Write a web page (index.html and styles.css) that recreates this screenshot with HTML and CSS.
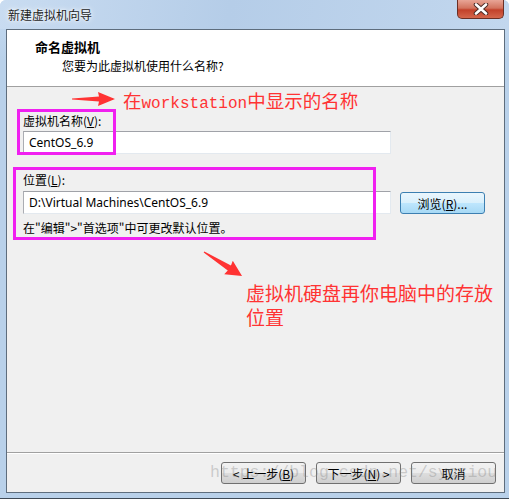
FILE: index.html
```html
<!DOCTYPE html>
<html lang="zh-CN">
<head>
    <meta charset="UTF-8">
    <title>新建虚拟机向导</title>
    <link rel="stylesheet" href="styles.css">
</head>
<body>
    <div class="window">
        <div class="titlebar">
            <span class="title">新建虚拟机向导</span>
            <div class="close">
                <svg width="20" height="12" viewBox="0 0 20 12">
                    <path d="M5 1.5 L15 10.5 M15 1.5 L5 10.5" stroke="#4a2a26" stroke-width="4.5" stroke-linecap="round"/>
                    <path d="M5 1.5 L15 10.5 M15 1.5 L5 10.5" stroke="#ffffff" stroke-width="2.6" stroke-linecap="round"/>
                </svg>
            </div>
        </div>

        <div class="client">
            <div class="header">
                <div class="header-title">命名虚拟机</div>
                <div class="header-sub">您要为此虚拟机使用什么名称?</div>
            </div>

            <div class="content">
                <div class="field">
                    <label class="field-label">虚拟机名称(<u>V</u>):</label>
                    <div class="input">CentOS_6.9</div>
                </div>
                <div class="field location">
                    <label class="field-label">位置(<u>L</u>):</label>
                    <div class="input-row">
                        <div class="input">D:\Virtual Machines\CentOS_6.9</div>
                        <button class="btn btn-browse">浏览(<u>R</u>)...</button>
                    </div>
                    <div class="hint">在"编辑"&gt;"首选项"中可更改默认位置。</div>
                </div>
            </div>

            <div class="footer">
                <button class="btn">&lt; 上一步(<u>B</u>)</button>
                <button class="btn">下一步(<u>N</u>) &gt;</button>
                <button class="btn">取消</button>
            </div>
        </div>

        <!-- annotations drawn over the dialog -->
        <div class="mark mark-name"></div>
        <div class="mark mark-location"></div>

        <svg class="arrow arrow-name" width="50" height="22" viewBox="0 0 50 22">
            <polygon points="2,10.6 29,8.6 28,4 45,11 28,18 29,13.4 2,11.4" fill="#ff3333"/>
        </svg>
        <div class="note note-name">在<span class="mono">workstation</span>中显示的名称</div>

        <svg class="arrow arrow-location" width="50" height="40" viewBox="0 0 50 40">
            <g transform="translate(4,6) rotate(32.3)">
                <polygon points="0,-0.6 30,-3 29,-8 45,0 29,8 30,3 0,0.6" fill="#ff3333"/>
            </g>
        </svg>
        <div class="note note-location">虚拟机硬盘再你电脑中的存放<br>位置</div>

        <div class="watermark">https://blog.csdn.net/syqziou</div>
    </div>
</body>
</html>
```

FILE: styles.css
```css
* {
    box-sizing: border-box;
}

body {
    margin: 0;
    background: #ffffff;
    font-family: "Noto Sans", "Noto Sans CJK SC", sans-serif;
    font-size: 12px;
    color: #000000;
}

.window {
    position: relative;
    width: 509px;
    height: 499px;
    background: linear-gradient(#c6dbf1, #b9d1ea 60px, #b9d1ea);
    border-bottom: 1px solid #3f4a56;
    border-radius: 6px 6px 0 0;
    display: flex;
    flex-direction: column;
}

.titlebar {
    height: 29px;
    padding-left: 8px;
    display: flex;
    align-items: center;
    background: linear-gradient(100deg, #c9dcf1, #b5cde8 45%, #c2d7ee);
    border-radius: 6px 6px 0 0;
}

.title {
    font-family: "Noto Sans CJK SC", sans-serif;
    font-size: 12px;
    color: #1e1e1e;
    text-shadow: 0 0 6px #ffffff, 0 0 3px #ffffff;
}

.close {
    position: absolute;
    top: 0;
    right: 5px;
    width: 47px;
    height: 19px;
    border: 1px solid #6b2f25;
    border-top: none;
    border-radius: 0 0 5px 5px;
    background: linear-gradient(#e8a596, #d2735e 45%, #c2412a 55%, #d4664c);
    display: flex;
    align-items: center;
    justify-content: center;
}

.client {
    margin: 0 4px 0 6px;
    height: 464px;
    border: 1px solid #5e6d7d;
    background: #f0f0f0;
    display: flex;
    flex-direction: column;
}

.header {
    height: 57px;
    background: #ffffff;
    border-bottom: 1px solid #a0a0a0;
    padding: 8px 0 0 28px;
    font-family: "Noto Sans CJK SC", sans-serif;
}

.header-title {
    font-size: 13px;
    font-weight: 700;
    line-height: 17px;
}

.header-sub {
    margin: 2px 0 0 27px;
    font-size: 12px;
    line-height: 17px;
}

.content {
    flex: 1;
    padding: 26px 16px 0 16px;
}

.field-label {
    display: block;
    font-family: "Noto Sans CJK SC", sans-serif;
    font-size: 12px;
    line-height: 16px;
}

.input {
    margin-top: 2px;
    width: 368px;
    height: 23px;
    padding: 0 5px;
    background: #ffffff;
    border: 1px solid #abadb3;
    border-top-color: #a0a2a8;
    border-right-color: #e3e9ef;
    border-bottom-color: #e3e9ef;
    line-height: 21px;
    font-size: 12px;
}

.location {
    margin-top: 18px;
}

.input-row {
    display: flex;
    align-items: flex-end;
}

.input-row .input {
    margin-top: 3px;
}

.hint {
    margin-top: 6px;
    font-family: "Noto Sans CJK SC", sans-serif;
    font-size: 12px;
    line-height: 16px;
}

.btn {
    width: 85px;
    height: 22px;
    padding: 0;
    border: 1px solid #707070;
    border-radius: 3px;
    background: linear-gradient(#f2f2f2, #ebebeb 50%, #dddddd 51%, #cfcfcf);
    font-family: "Noto Sans CJK SC", sans-serif;
    font-size: 12px;
    color: #000000;
}

.btn-browse {
    margin-left: 9px;
    border-color: #3c7fb1;
    background: linear-gradient(#eaf6fd, #d9f0fc 50%, #bee6fd 51%, #a7d9f5);
}

.footer {
    height: 40px;
    border-top: 1px solid #a0a0a0;
    box-shadow: inset 0 1px 0 #ffffff;
    padding: 9px 8px 0 0;
    display: flex;
    justify-content: flex-end;
    gap: 10px;
}

.mark {
    position: absolute;
    border: 3px solid #f020f0;
}

.mark-name {
    left: 17px;
    top: 109px;
    width: 99px;
    height: 46px;
}

.mark-location {
    left: 13px;
    top: 167px;
    width: 363px;
    height: 73px;
}

.arrow {
    position: absolute;
}

.arrow-name {
    left: 70px;
    top: 88px;
}

.arrow-location {
    left: 200px;
    top: 246px;
}

.note {
    position: absolute;
    font-family: "Noto Sans CJK SC", sans-serif;
    font-size: 19px;
    color: #ff3333;
    white-space: nowrap;
}

.note-name {
    left: 123px;
    top: 88px;
    line-height: 24px;
    font-size: 18.5px;
}

.mono {
    font-family: "Liberation Mono", monospace;
    font-size: 16px;
}

.note-location {
    left: 246px;
    top: 281px;
    line-height: 24px;
}

.watermark {
    position: absolute;
    left: 210px;
    top: 463px;
    font-family: "Liberation Mono", monospace;
    font-size: 16.5px;
    color: rgba(130, 130, 130, 0.35);
    white-space: nowrap;
    pointer-events: none;
}
```
